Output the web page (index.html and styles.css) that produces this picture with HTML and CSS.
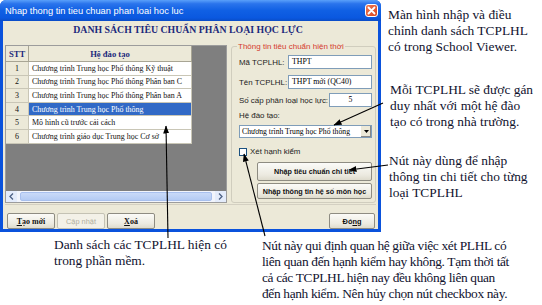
FILE: index.html
```html
<!DOCTYPE html>
<html lang="vi">
<head>
<meta charset="utf-8">
<title>Nhap thong tin tieu chuan phan loai hoc luc</title>
<link rel="stylesheet" href="styles.css">
</head>
<body>
<div class="stage">
  <div class="window">
    <div class="titlebar">
      <span class="title">Nhap thong tin tieu chuan phan loai hoc luc</span>
      <span class="close"><svg width="9" height="9" viewBox="0 0 9 9"><path d="M1.5 1.5 L7.5 7.5 M7.5 1.5 L1.5 7.5" stroke="#fff" stroke-width="1.8" stroke-linecap="round"/></svg></span>
    </div>
    <div class="client">
      <h1 class="heading">DANH SÁCH TIÊU CHUẨN PHÂN LOẠI HỌC LỰC</h1>
      <div class="main">
        <div class="grid">
          <div class="table">
            <div class="th stt">STT</div><div class="th">Hệ đào tạo</div>
            <div class="td stt">1</div><div class="td">Chương trình Trung học Phổ thông Kỹ thuật</div>
            <div class="td stt">2</div><div class="td">Chương trình Trung học Phổ thông Phân ban C</div>
            <div class="td stt">3</div><div class="td">Chương trình Trung học Phổ thông Phân ban A</div>
            <div class="td stt">4</div><div class="td sel">Chương trình Trung học Phổ thông</div>
            <div class="td stt">5</div><div class="td">Mô hình cũ trước cải cách</div>
            <div class="td stt">6</div><div class="td">Chương trình giáo dục Trung học Cơ sở</div>
          </div>
          <div class="hscroll">
            <span class="sarrow"><svg width="5" height="7" viewBox="0 0 5 7"><path d="M4 0.5 L1 3.5 L4 6.5" fill="none" stroke="#4d6185" stroke-width="1.3"/></svg></span>
            <span class="thumb"></span>
            <span class="sarrow"><svg width="5" height="7" viewBox="0 0 5 7"><path d="M1 0.5 L4 3.5 L1 6.5" fill="none" stroke="#4d6185" stroke-width="1.3"/></svg></span>
          </div>
        </div>
        <fieldset class="group">
          <legend>Thông tin tiêu chuẩn hiện thời</legend>
          <div class="field f1"><span class="lbl">Mã TCPLHL:</span><span class="input wide">THPT</span></div>
          <div class="field f2"><span class="lbl">Tên TCPLHL:</span><span class="input wide">THPT mới (QC40)</span></div>
          <div class="field f3"><span class="lbl">Số cấp phân loại học lực:</span><span class="input num">5</span></div>
          <div class="lbl he">Hệ đào tạo:</div>
          <div class="select"><span class="sel-text">Chương trình Trung học Phổ thông</span><span class="drop"><svg width="5" height="3" viewBox="0 0 5 3"><path d="M0 0 H5 L2.5 3 Z" fill="#000"/></svg></span></div>
          <div class="check"><span class="box"></span><span class="lbl">Xét hạnh kiểm</span></div>
          <div class="btn gbtn b1">Nhập tiêu chuẩn chi tiết</div>
          <div class="btn gbtn b2">Nhập thông tin hệ số môn học</div>
        </fieldset>
      </div>
      <div class="footer">
        <span class="btn fbtn serif"><u>T</u>ạo mới</span>
        <span class="btn fbtn disabled">Cập nhật</span>
        <span class="btn fbtn serif xoa"><u>X</u>oá</span>
        <span class="btn fbtn dong">Đó<u>ng</u></span>
      </div>
    </div>
  </div>

  <p class="note n1">Màn hình nhập và điều<br>chỉnh danh sách TCPLHL<br>có trong School Viewer.</p>
  <p class="note n2">Mỗi TCPLHL sẽ được gán<br>duy nhất với một hệ đào<br>tạo có trong nhà trường.</p>
  <p class="note n3">Nút này dùng để nhập<br>thông tin chi tiết cho từng<br>loại TCPLHL</p>
  <p class="note n4">Danh sách các TCPLHL hiện có<br>trong phần mềm.</p>
  <p class="note n5">Nút này qui định quan hệ giữa việc xét PLHL có<br>liên quan đến hạnh kiểm hay không. Tạm thời tất<br>cả các TCPLHL hiện nay đều không liên quan<br>đến hạnh kiểm. Nên hủy chọn nút checkbox này.</p>

  <svg class="arrows" width="542" height="305" viewBox="0 0 542 305">
    <defs>
      <marker id="ah" markerWidth="8" markerHeight="6" refX="7.5" refY="3" orient="auto" markerUnits="userSpaceOnUse">
        <path d="M0 0 L8 3 L0 6 Z" fill="#000"/>
      </marker>
    </defs>
    <g stroke="#000" stroke-width="1.1" fill="none">
      <line x1="383" y1="103" x2="334" y2="125" marker-end="url(#ah)"/>
      <line x1="388" y1="165" x2="349" y2="170" marker-end="url(#ah)"/>
      <line x1="265" y1="236" x2="244" y2="154" marker-end="url(#ah)"/>
      <line x1="168" y1="238" x2="166" y2="126" marker-end="url(#ah)"/>
    </g>
  </svg>
</div>
</body>
</html>
```

FILE: styles.css
```css
* { box-sizing: border-box; }

body {
  margin: 0;
  background: #fff;
}

.stage {
  position: relative;
  width: 542px;
  height: 305px;
  overflow: hidden;
  font-family: "Liberation Sans", Arial, sans-serif;
}

/* ---------- window ---------- */
.window {
  width: 381px;
  height: 232px;
  display: flex;
  flex-direction: column;
  background: #0A52DC;
  border-radius: 6px 6px 0 0;
  padding: 0 3px 3px;
}

.titlebar {
  height: 22px;
  margin: 0 -3px;
  padding: 0 3px 0 5px;
  display: flex;
  align-items: center;
  justify-content: space-between;
  background: linear-gradient(#5AA0FA 0%, #2A74EC 18%, #1060E4 50%, #0A58E0 85%, #0A4CC6 100%);
  border-radius: 6px 6px 0 0;
}

.title {
  color: #fff;
  font-size: 9.3px;
}

.close {
  width: 13px;
  height: 13px;
  border: 1px solid #fff;
  border-radius: 3px;
  background: linear-gradient(135deg, #EE7A55, #D9441E);
  display: flex;
  align-items: center;
  justify-content: center;
}

.client {
  flex: 1;
  background: #ECE9D8;
  display: flex;
  flex-direction: column;
  padding: 0 2px;
}

.heading {
  height: 24px;
  margin: 0;
  padding-right: 5px;
  font: bold 9.8px/17px "Liberation Serif", "Times New Roman", serif;
  color: #1C2A7C;
  text-align: center;
}

.main {
  display: flex;
  height: 158px;
}

/* ---------- grid ---------- */
.grid {
  width: 222px;
  border: 1px solid #9C9C9C;
  background: #7F7F7F;
  display: flex;
  flex-direction: column;
  justify-content: space-between;
}

.table {
  width: 186px;
  display: grid;
  grid-template-columns: 23px 1fr;
  grid-template-rows: 16px repeat(6, 13.6px);
  font-family: "Liberation Serif", "Times New Roman", serif;
  font-size: 7.95px;
  background: #fff;
}

.th, .td {
  border-right: 1px solid #C9C6B6;
  border-bottom: 1px solid #C9C6B6;
  display: flex;
  align-items: center;
  white-space: nowrap;
  overflow: hidden;
}

.th {
  background: #ECE9D8;
  justify-content: center;
  font-weight: bold;
  color: #1C2A7C;
  font-size: 8.6px;
  border-color: #A8A594;
}

.td {
  padding-left: 3px;
  color: #111;
}

.td.stt {
  background: #ECE9D8;
  justify-content: center;
  padding-left: 0;
}

.td.sel {
  background: #3169C6;
  color: #fff;
}

.hscroll {
  height: 11px;
  display: flex;
  align-items: stretch;
  background: #F2F5FC;
}

.sarrow {
  width: 11px;
  display: flex;
  align-items: center;
  justify-content: center;
  background: #E4ECFB;
}

.thumb {
  flex: 1;
  margin: 1px 3px;
  border-radius: 2px;
  background: linear-gradient(#C9DAF8, #B4CBF4);
  border: 1px solid #A8C0EE;
}

/* ---------- group box ---------- */
.group {
  width: 145px;
  margin: -3px 0 0 4px;
  padding: 0 3px 0 7px;
  min-width: 0;
  border: 1px solid #D0CDBE;
  border-radius: 3px;
  display: flex;
  flex-direction: column;
  height: 161px;
}

.group legend {
  padding: 0 1px;
  margin-left: -2px;
  font-size: 8px;
  line-height: 9px;
  color: #D43A2E;
}

.lbl {
  font-size: 7.9px;
  color: #222;
  white-space: nowrap;
}

.field {
  display: flex;
  align-items: center;
  justify-content: space-between;
  height: 14px;
}

.f1 { margin-top: 4px; }
.f2 { margin-top: 6px; }
.f3 { margin-top: 4px; }

.input {
  height: 14px;
  background: #fff;
  border: 1px solid #7F9DB9;
  font-family: "Liberation Serif", "Times New Roman", serif;
  font-size: 7.8px;
  line-height: 12px;
  padding-left: 3px;
  color: #000;
  white-space: nowrap;
}

.input.wide { width: 84px; }

.input.num {
  width: 43px;
  text-align: center;
  padding-left: 0;
}

.he {
  margin-top: 4px;
  line-height: 10px;
}

.select {
  margin-top: 4px;
  height: 13px;
  display: flex;
  align-items: stretch;
  background: #fff;
  border: 1px solid #7F9DB9;
}

.sel-text {
  flex: 1;
  font-family: "Liberation Serif", "Times New Roman", serif;
  font-size: 7.7px;
  line-height: 11px;
  padding-left: 2px;
  white-space: nowrap;
  overflow: hidden;
}

.drop {
  width: 11px;
  display: flex;
  align-items: center;
  justify-content: center;
  background: #ECE9D8;
  border-left: 1px solid #fff;
  box-shadow: inset -1px -1px 0 #888;
}

.check {
  margin-top: 9px;
  height: 9px;
  display: flex;
  align-items: center;
  gap: 3px;
}

.box {
  width: 8px;
  height: 8px;
  background: #fff;
  border: 1px solid #1C5180;
}

/* ---------- buttons ---------- */
.btn {
  display: flex;
  align-items: center;
  justify-content: center;
  background: linear-gradient(#FBFBF8, #ECEAE0 70%, #DEDBCD);
  border: 1px solid #8E8C82;
  border-radius: 2px;
  white-space: nowrap;
}

.gbtn {
  margin-left: 18px;
  font-size: 7.2px;
  font-weight: bold;
  color: #111;
}

.b1 { margin-top: 6px; height: 19px; }
.b2 { margin-top: 2px; height: 16px; }

.footer {
  display: flex;
  align-items: flex-start;
  padding: 8px 0 0 2px;
  border-top: 1px solid #D4D0C2;
  margin-top: 1px;
}

.fbtn {
  width: 48px;
  height: 16px;
  font-size: 7.4px;
  font-weight: bold;
  color: #111;
}

.fbtn.serif {
  font-family: "Liberation Serif", "Times New Roman", serif;
  font-size: 8px;
}

.fbtn.disabled {
  margin-left: 2px;
  font-weight: normal;
  color: #B0AE9F;
  border-color: #C4C2B4;
  background: #F3F1E8;
}

.fbtn.xoa {
  margin-left: 2px;
  width: 48px;
}

.fbtn.dong {
  margin-left: auto;
  margin-right: 1px;
  width: 46px;
}

/* ---------- annotations ---------- */
.note {
  position: absolute;
  margin: 0;
  font-family: "Liberation Serif", "Times New Roman", serif;
  font-size: 13.4px;
  line-height: 16px;
  color: #10122E;
  white-space: nowrap;
}

.n1 { left: 388px; top: 7px; }
.n2 { left: 390px; top: 82px; }
.n3 { left: 389px; top: 153px; }
.n4 { left: 54px; top: 237px; }
.n5 { left: 262px; top: 238px; letter-spacing: -0.35px; }

.arrows {
  position: absolute;
  left: 0;
  top: 0;
  pointer-events: none;
}
```
